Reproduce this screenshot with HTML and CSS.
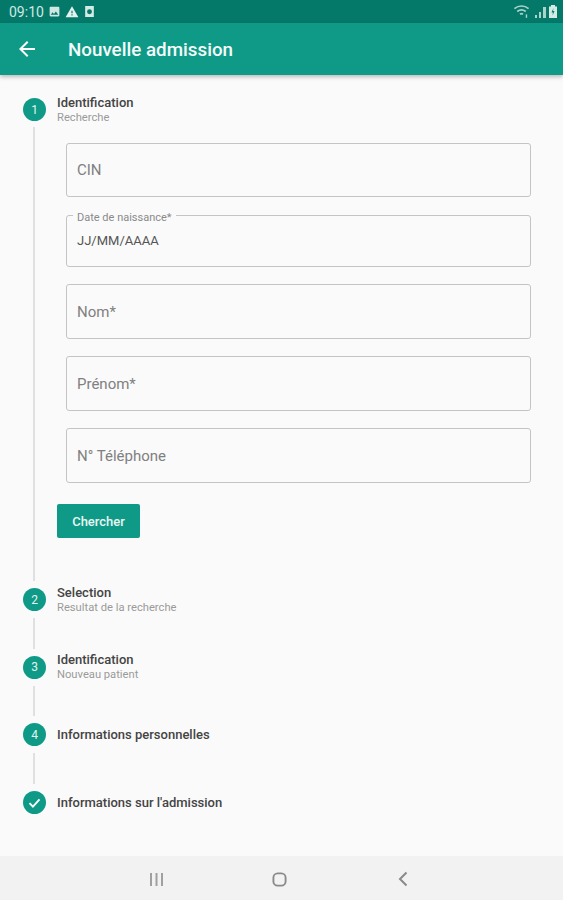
FILE: index.html
```html
<!DOCTYPE html>
<html lang="fr">
<head>
    <meta charset="UTF-8">
    <meta name="viewport" content="width=device-width, initial-scale=1.0">
    <title>Nouvelle admission</title>
    <link rel="stylesheet" href="styles.css">
</head>
<body>
    <div class="status-bar">
        <span class="clock">09:10</span>
        <svg class="status-icon" width="13" height="13" viewBox="0 0 24 24"><path fill="#cfe8e3" d="M21 19V5a2 2 0 0 0-2-2H5a2 2 0 0 0-2 2v14a2 2 0 0 0 2 2h14a2 2 0 0 0 2-2zM8.500 13.500l2.500 3 3.500-4.500 4.500 6H5l3.500-4.500z"/></svg>
        <svg class="status-icon" width="14" height="14" viewBox="0 0 24 24"><path fill="#e4f1ee" d="M1 21h22L12 2 1 21zm12-3h-2v-2h2v2zm0-4h-2v-4h2v4z"/></svg>
        <svg class="status-icon" width="13" height="13" viewBox="0 0 24 24"><path fill="#d5ebe6" fill-rule="evenodd" d="M4 2h16v20H4zM12 8a4.500 4.500 0 1 0 0 9 4.500 4.500 0 0 0 0-9z"/></svg>
        <div class="status-right">
            <svg class="wifi-icon" width="17" height="13" viewBox="0 0 24 18"><path fill="none" stroke="#a9d3cb" stroke-width="2.400" d="M2 5c6-5 14-5 20 0M6 9c4-3 8-3 12 0M10 13c1-1 3-1 4 0"/><path fill="#a9d3cb" d="M18 13h2v5h-2z"/></svg>
            <svg width="11" height="12" viewBox="0 0 11 12"><path fill="#a9d3cb" d="M0 12V9h2v3zM4 12V6h2v6zM8 12V1h3v11z"/></svg>
            <svg width="8" height="13" viewBox="0 0 8 13"><path fill="#d5ebe6" d="M2 0h4v1.500h2V13H0V1.500h2z"/><path fill="#04796a" d="M4.500 3 2.500 7.500h1.500L3.500 10.500 5.500 6H4z"/></svg>
        </div>
    </div>

    <header class="app-bar">
        <svg class="back-icon" width="24" height="24" viewBox="0 0 24 24"><path fill="#fff" d="M20 11H7.830l5.590-5.590L12 4l-8 8 8 8 1.410-1.410L7.830 13H20v-2z"/></svg>
        <h1>Nouvelle admission</h1>
    </header>

    <main class="stepper">
        <div class="step-head">
            <div class="step-num">1</div>
            <div>
                <div class="step-title">Identification</div>
                <div class="step-sub">Recherche</div>
            </div>
        </div>
        <div class="step-body">
            <div class="field field-cin"><span class="placeholder">CIN</span></div>
            <div class="field field-date">
                <span class="field-label">Date de naissance*</span>
                <span class="field-value">JJ/MM/AAAA</span>
            </div>
            <div class="field"><span class="placeholder">Nom*</span></div>
            <div class="field"><span class="placeholder">Prénom*</span></div>
            <div class="field"><span class="placeholder">N° Téléphone</span></div>
            <button class="btn-search">Chercher</button>
        </div>

        <div class="step-head">
            <div class="step-num">2</div>
            <div>
                <div class="step-title">Selection</div>
                <div class="step-sub">Resultat de la recherche</div>
            </div>
        </div>
        <div class="step-line"></div>

        <div class="step-head">
            <div class="step-num">3</div>
            <div>
                <div class="step-title">Identification</div>
                <div class="step-sub">Nouveau patient</div>
            </div>
        </div>
        <div class="step-line"></div>

        <div class="step-head">
            <div class="step-num">4</div>
            <div class="step-title">Informations personnelles</div>
        </div>
        <div class="step-line"></div>

        <div class="step-head">
            <div class="step-num">
                <svg width="15" height="15" viewBox="0 0 24 24"><path fill="none" stroke="#fff" stroke-width="3" d="M4 13l5.500 5.500L20 7"/></svg>
            </div>
            <div class="step-title">Informations sur l'admission</div>
        </div>
    </main>

    <nav class="nav-bar">
        <svg width="15" height="13" viewBox="0 0 15 13"><path fill="#a0a0a0" d="M1 0h2v13H1zM6.500 0h2v13h-2zM12 0h2v13h-2z"/></svg>
        <svg width="15" height="15" viewBox="0 0 16 16"><rect x="1.500" y="1.500" width="13" height="13" rx="4.500" fill="none" stroke="#8a8a8a" stroke-width="2"/></svg>
        <svg class="nav-back" width="10" height="16" viewBox="0 0 10 16"><path fill="none" stroke="#8a8a8a" stroke-width="2" d="M8.500 1.500 2 8l6.500 6.500"/></svg>
    </nav>
</body>
</html>
```

FILE: styles.css
```css
* {
    box-sizing: border-box;
}
html, body {
    height: 100%;
}
body {
    margin: 0;
    height: 900px;
    overflow: hidden;
    display: flex;
    flex-direction: column;
    font-family: Roboto, 'Liberation Sans', sans-serif;
    background-color: #fafafa;
}
.status-bar {
    height: 23px;
    flex-shrink: 0;
    display: flex;
    align-items: center;
    gap: 4px;
    padding: 0 6px 0 9px;
    background: #04796a;
    color: #cfe8e3;
    font-size: 14px;
}
.status-right {
    margin-left: auto;
    display: flex;
    align-items: center;
    gap: 3px;
}
.wifi-icon {
    margin-right: 2px;
}
.app-bar {
    height: 52px;
    flex-shrink: 0;
    display: flex;
    align-items: center;
    padding-left: 15px;
    background: #0f9a87;
    box-shadow: 0 2px 4px rgba(0,0,0,0.25);
}
.back-icon {
    margin-right: 29px;
}
.app-bar h1 {
    margin: 2px 0 0;
    color: #f4fbfa;
    font-size: 18.8px;
    font-weight: 500;
}
.stepper {
    flex: 1;
    padding: 23px 32px 0 23px;
}
.step-head {
    height: 23px;
    display: flex;
    align-items: center;
    gap: 11px;
}
.step-num {
    width: 23px;
    height: 23px;
    flex-shrink: 0;
    display: flex;
    align-items: center;
    justify-content: center;
    border-radius: 50%;
    background: #0f9a87;
    color: #e4f4f1;
    font-size: 12px;
}
.step-title {
    color: #444;
    font-size: 13px;
    font-weight: 500;
    line-height: 15px;
}
.step-sub {
    color: #9a9a9a;
    font-size: 11.200px;
    line-height: 15px;
}
.step-body {
    margin: 6px 0 7px 10px;
    padding: 16px 0 43px 22px;
    border-left: 2px solid #e0e0e0;
}
.step-line {
    height: 30.700px;
    margin: 7px 0 7px 10px;
    border-left: 2px solid #e0e0e0;
}
.field {
    position: relative;
    height: 55px;
    margin: 0 0 17px 9px;
    padding-left: 10px;
    display: flex;
    align-items: center;
    border: 1px solid #c4c4c4;
    border-radius: 3px;
}
.field-cin {
    height: 54px;
    margin-bottom: 18px;
}
.field-date {
    height: 52px;
}
.placeholder {
    color: #808080;
    font-size: 15px;
}
.field-label {
    position: absolute;
    top: -4px;
    left: 6px;
    padding: 0 4px;
    background: #fafafa;
    color: #8a8a8a;
    font-size: 11px;
    line-height: 12px;
}
.field-value {
    margin-top: -1px;
    color: #555;
    font-size: 13px;
}
.btn-search {
    display: block;
    width: 83px;
    height: 34px;
    margin-top: 21px;
    padding: 0;
    border: none;
    border-radius: 2px;
    background: #0f9a87;
    color: #e8f6f3;
    font-family: inherit;
    font-size: 13px;
    font-weight: 500;
}
.nav-bar {
    height: 44px;
    flex-shrink: 0;
    display: flex;
    align-items: center;
    gap: 108px;
    padding: 2px 0 0 149px;
    background: #f2f2f2;
}
.nav-back {
    margin-left: 3px;
}
```
